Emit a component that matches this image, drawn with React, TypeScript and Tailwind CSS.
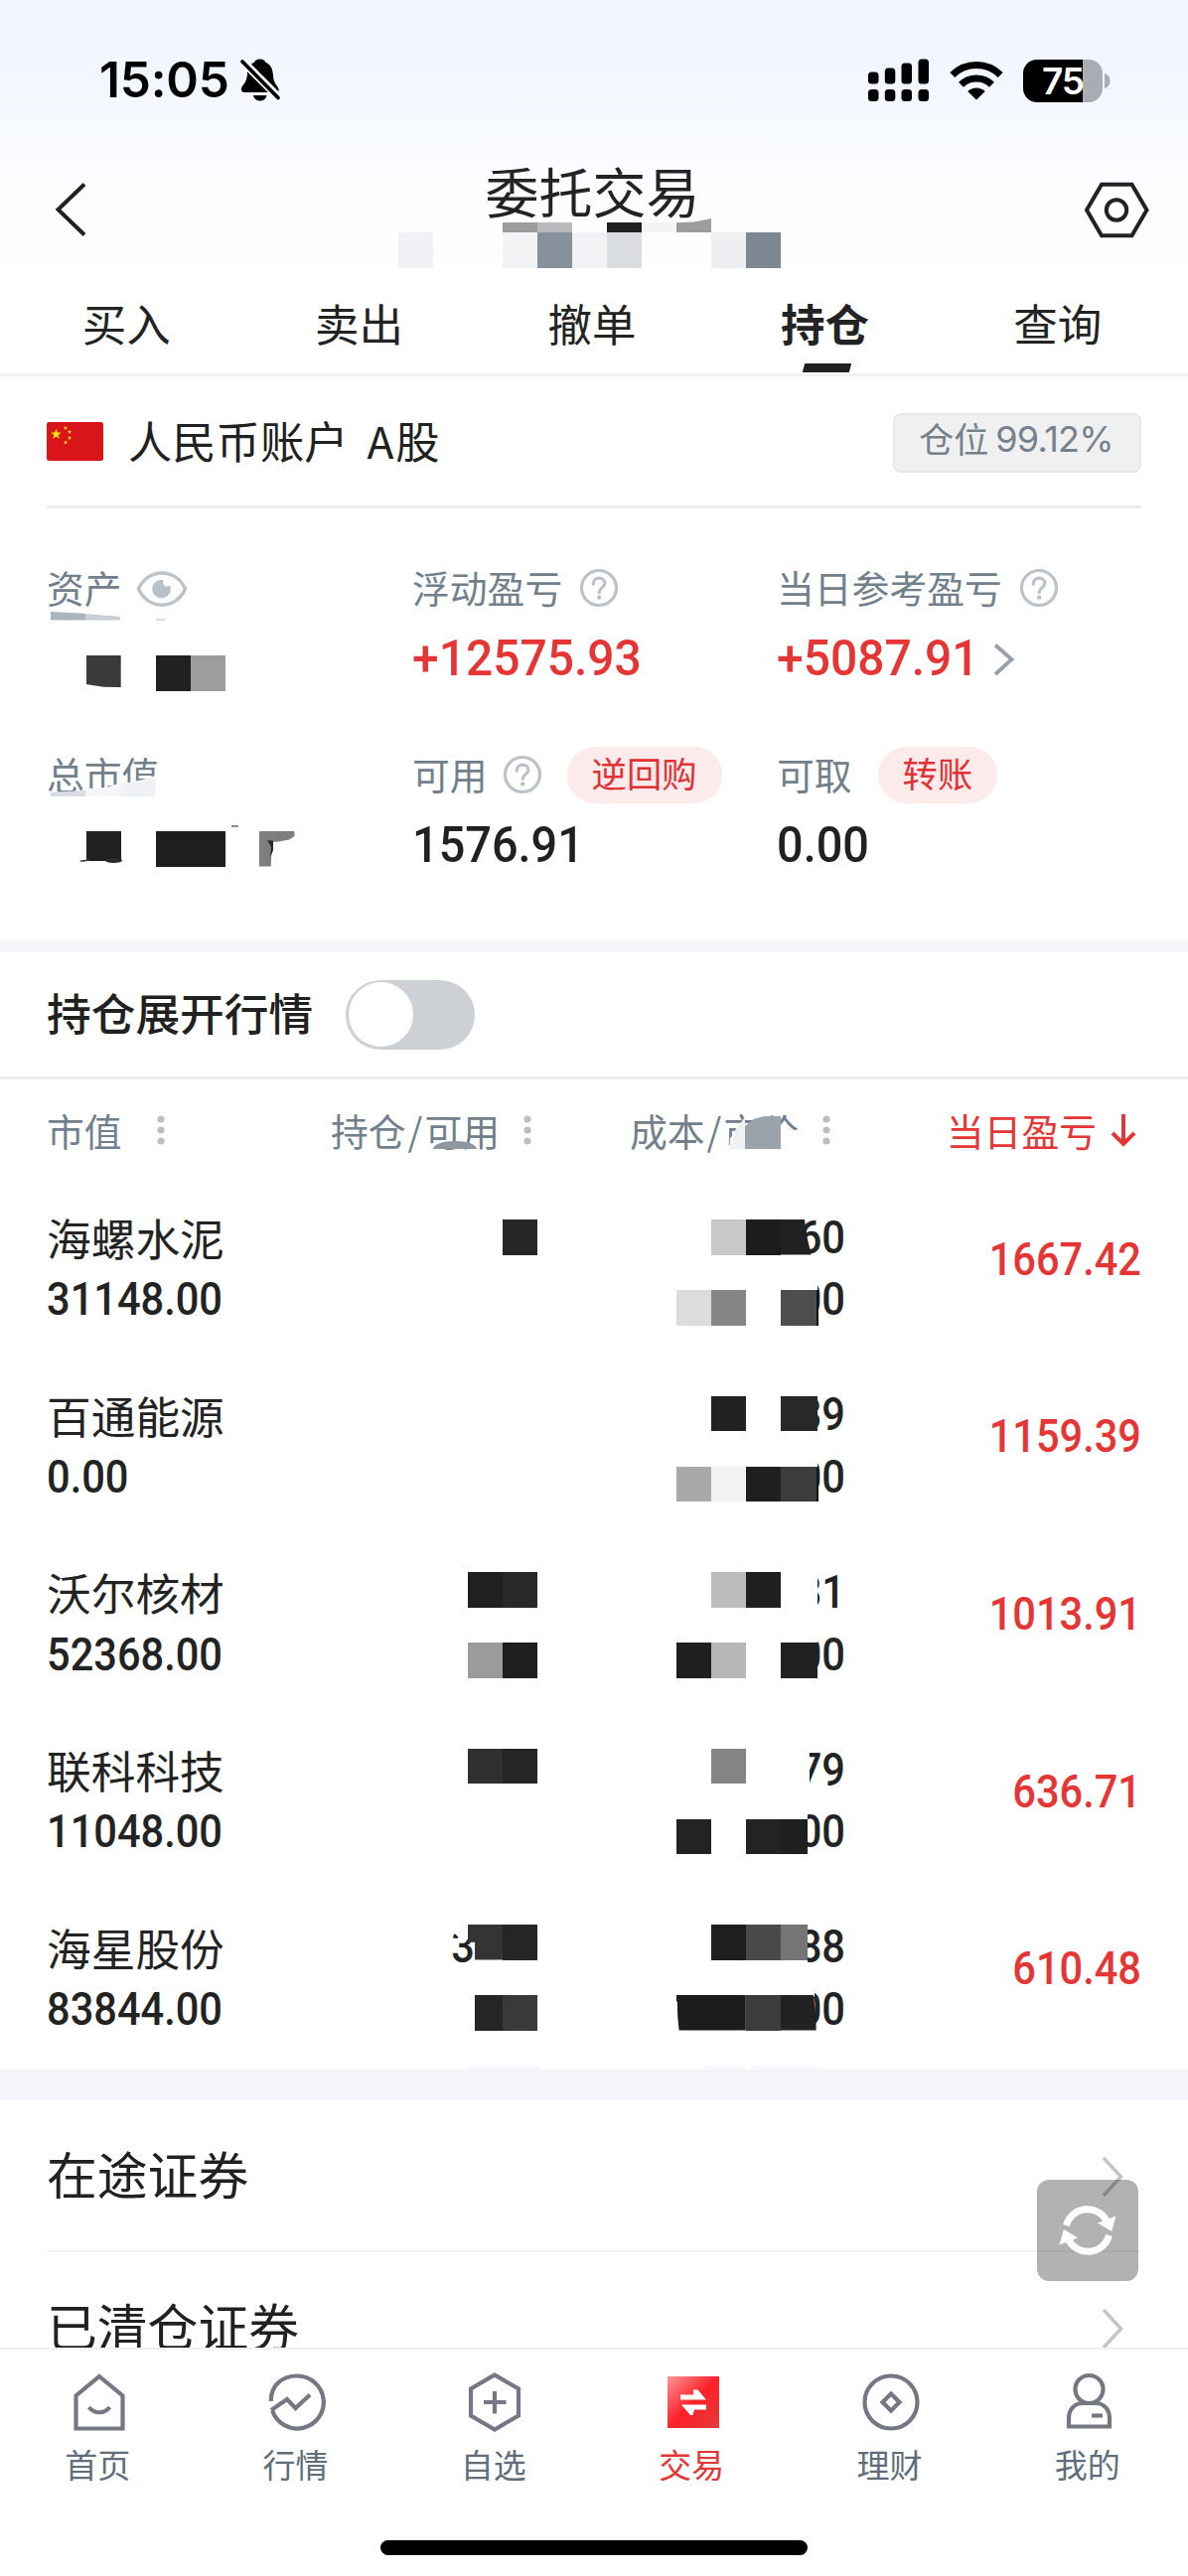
import React from "react";

const cjk = "font-['Noto_Sans_CJK_SC',sans-serif]";
const din = "font-['Roboto',sans-serif] font-medium";

type Cell = { x: number; y: number; w?: number; h?: number; c: string; clip?: string };

/* Pixelated privacy blocks laid over the content of a relative container. */
function Mosaic({ cells }: { cells: Cell[] }) {
  return (
    <>
      {cells.map((b, i) => (
        <span
          key={i}
          aria-hidden
          className="absolute block"
          style={{ left: b.x, top: b.y, width: b.w ?? 35.2, height: b.h ?? 35.5, background: b.c, clipPath: b.clip }}
        />
      ))}
    </>
  );
}

function Help() {
  return (
    <svg width="40" height="40" viewBox="0 0 40 40" fill="none" stroke="#bcc2c8" strokeWidth="3.200" className="mt-[3px]">
      <circle cx="20" cy="20" r="17.5" />
      <path d="M14.2 16.2c0-3.6 2.5-6 5.9-6s5.8 2.300 5.800 5.200c0 4.200-5.700 4.600-5.700 9" strokeLinecap="round" />
      <circle cx="20.200" cy="29.500" r="2.200" fill="#bcc2c8" stroke="none" />
    </svg>
  );
}

function Dots() {
  return (
    <svg width="8" height="32" viewBox="0 0 8 32" fill="#b9bfc5" className="mt-[3px]">
      <circle cx="4" cy="5" r="3.600" />
      <circle cx="4" cy="16" r="3.600" />
      <circle cx="4" cy="27" r="3.600" />
    </svg>
  );
}

function Chevron() {
  return (
    <svg width="24" height="40" viewBox="0 0 24 40" fill="none" stroke="#c6c6c6" strokeWidth="3.600" className="mt-[3px]">
      <path d="M3 1 L20.500 20 L3 39" />
    </svg>
  );
}

function StatusBar() {
  return (
    <div className="flex h-[162px] shrink-0 items-center pr-[78px] pl-[100px]">
      <span className="font-['Inter',sans-serif] text-[49.5px] leading-none font-semibold tracking-[-0.2px] text-black">15:05</span>
      <svg width="41" height="44" viewBox="0 0 41 44" className="ml-[11px]">
        <path d="M19.700 0.500c-3.200 0-5 1.500-5.600 3.200C8.500 6 6.800 11 6.600 17.500c-.3 7.500-5.600 9-5.600 13.500 0 2 1 3 3 3h31.500c2.600 0 3.500-1.200 3-3.200-.9-3.800-5-5.300-5.500-13.300C32.700 11 31 6 25.300 3.700 24.700 2 22.900.5 19.700.5z" fill="#000" />
        <path d="M13 37h13.500c-.5 3.300-3.300 5.500-6.700 5.500S13.500 40.300 13 37z" fill="#000" />
        <path d="M-3 -2.500 L41 41.500" stroke="#f4f8ff" strokeWidth="8" />
        <path d="M-4 7 L7 18 L6 0 Z" fill="#f4f8ff" />
        <path d="M2 3 L38 39.500" stroke="#000" strokeWidth="3.600" strokeLinecap="round" />
      </svg>
      <div className="ml-auto flex items-center">
        <svg width="62" height="44" viewBox="0 0 62 44" fill="#000">
          <rect x="0" y="13.500" width="10.500" height="12" rx="3.500" />
          <rect x="16.800" y="9.500" width="10.500" height="16" rx="3.500" />
          <rect x="33.500" y="4.500" width="10.500" height="21" rx="3.500" />
          <rect x="50.500" y="0.500" width="10.500" height="25" rx="3.500" />
          <rect x="0" y="31" width="10.500" height="12" rx="3.500" />
          <rect x="16.800" y="31" width="10.500" height="12" rx="3.500" />
          <rect x="33.500" y="31" width="10.500" height="12" rx="3.500" />
          <rect x="50.500" y="31" width="10.500" height="12" rx="3.500" />
        </svg>
        <svg width="54" height="40" viewBox="0 0 54 40" fill="none" stroke="#000" strokeWidth="7" className="ml-[20px]">
          <path d="M2.800 14.500 A34.500 34.500 0 0 1 51.200 14.500" />
          <path d="M11.500 24.300 A22 22 0 0 1 42.500 24.300" />
          <path d="M27 39.500 L18.200 31 A12.500 12.500 0 0 1 35.800 31 Z" fill="#000" stroke="none" />
        </svg>
        <div className="ml-[20px] flex items-center">
          <div className="flex h-[43px] w-[80px] items-center justify-center rounded-[14px] bg-[linear-gradient(90deg,#000_60px,#a9adb3_60px)]">
            <span className="font-['Inter',sans-serif] text-[37px] leading-none font-semibold tracking-[-1px] text-white">75</span>
          </div>
          <svg width="6" height="15" viewBox="0 0 6 15" className="ml-[2px]">
            <path d="M0 0 C4 1.500 5.500 4 5.500 7.500 S4 13.500 0 15 Z" fill="#a9adb3" />
          </svg>
        </div>
      </div>
    </div>
  );
}

const titleCells: Cell[] = [
  { x: 401, y: 72, c: "#eff1f4" },
  { x: 506, y: 62, h: 10, c: "#9b9c9e" },
  { x: 541, y: 62, h: 10, c: "#b9babc" },
  { x: 506, y: 72, c: "#f1f3f5" },
  { x: 541, y: 72, c: "#87919b" },
  { x: 576, y: 72, c: "#f1f3f5" },
  { x: 611, y: 62, h: 10, c: "#212121" },
  { x: 646, y: 62, h: 10, c: "#f3f4f6" },
  { x: 681, y: 58, h: 14, c: "#9c9d9f", clip: "polygon(0 30%, 50% 25%, 100% 0, 100% 100%, 0 100%)" },
  { x: 611, y: 72, c: "#d9dde0" },
  { x: 716, y: 72, c: "#eeeff1" },
  { x: 751, y: 72, c: "#7c8791" },
];

function NavBar() {
  return (
    <div className="relative flex h-[98px] shrink-0 justify-between pr-[39px] pl-[54px]">
      <svg width="36" height="98" viewBox="0 0 36 98" fill="none" stroke="#212121" strokeWidth="4">
        <path d="M31 23.500 L4.500 49 L31 74.500" />
      </svg>
      <h1 className={`${cjk} ml-[12px] pt-px text-[54px] leading-[57px] text-[#232323]`}>委托交易</h1>
      <svg width="66" height="98" viewBox="0 0 66 98" fill="none" stroke="#212121" strokeWidth="4">
        <path d="M3 49.500 L18 23.800 H48.500 L63.500 49.500 L48.500 75.200 H18 Z" />
        <circle cx="33" cy="49.500" r="10.200" />
      </svg>
      <Mosaic cells={titleCells} />
    </div>
  );
}

function Tabs() {
  return (
    <div className="flex h-[119px] shrink-0 border-b-[3px] border-[#efeff0] pt-[15px] pr-[14px] pl-[10px]">
      {["买入", "卖出", "撤单", "持仓", "查询"].map((t) => {
        const on = t === "持仓";
        return (
          <div key={t} className="relative flex flex-1 items-center justify-center">
            <span className={`${cjk} text-[44.5px] leading-none text-[#232323] ${on ? "font-bold" : ""}`}>{t}</span>
            {on && <span className="absolute bottom-px ml-[4px] h-[9px] w-[47px] -skew-x-[15deg] bg-[#212121]" />}
          </div>
        );
      })}
    </div>
  );
}

function Flag() {
  const star = (cx: number, cy: number, r: number) =>
    Array.from({ length: 10 }, (_, i) => {
      const a = -Math.PI / 2 + (i * Math.PI) / 5;
      const q = i % 2 ? r * 0.4 : r;
      return `${cx + q * Math.cos(a)},${cy + q * Math.sin(a)}`;
    }).join(" ");
  return (
    <svg width="57" height="39" viewBox="0 0 57 39">
      <rect width="57" height="39" rx="2.500" fill="#d9151a" />
      <g fill="#fde30a">
        <polygon points={star(9.500, 12.300, 5.600)} />
        <polygon points={star(19, 6, 2.200)} />
        <polygon points={star(23, 10, 2.200)} />
        <polygon points={star(23, 16, 2.200)} />
        <polygon points={star(19, 20.500, 2.200)} />
      </g>
    </svg>
  );
}

function Label({ children }: { children: React.ReactNode }) {
  return <span className={`${cjk} pt-px text-[37.8px] leading-none text-[#72808c]`}>{children}</span>;
}

function Pill({ children }: { children: React.ReactNode }) {
  return (
    <span className={`${cjk} mt-[4px] flex h-[57px] items-center rounded-full bg-[#fdeaeb] px-[25px] pb-[5px] text-[35.3px] leading-none text-[#e03234]`}>
      {children}
    </span>
  );
}

function Figure({ children, red }: { children: React.ReactNode; red?: boolean }) {
  return (
    <span className={`${din} inline-block origin-left text-[50.5px] leading-none ${red ? "scale-x-[0.95] text-[#e53535]" : "scale-x-[0.928] text-[#212121]"}`}>
      {children}
    </span>
  );
}

const summaryCells: Cell[] = [
  { x: 51, y: 104, h: 8.500, c: "#adb5bc", clip: "polygon(0 0, 100% 20%, 100% 100%, 0 100%)" },
  { x: 86, y: 106, h: 6.500, c: "#c9cfd3", clip: "polygon(0 0, 100% 45%, 100% 100%, 0 100%)" },
  { x: 157, y: 111, w: 9, h: 1.500, c: "#d9dde0" },
  { x: 86.500, y: 148, h: 32, c: "#3b3b3b", clip: "polygon(0 0, 100% 0, 100% 100%, 50% 99%, 0 91%)" },
  { x: 156.500, y: 148, c: "#212121" },
  { x: 191.500, y: 148, c: "#9d9d9d" },
  { x: 51, y: 284, w: 35.500, h: 6, c: "#d9dce0", clip: "polygon(0 30%, 100% 0, 100% 100%, 0 100%)" },
  { x: 86, y: 276, w: 36, h: 14, c: "#f6f6f8", clip: "polygon(0 45%, 60% 35%, 100% 0, 100% 100%, 0 100%)" },
  { x: 121.500, y: 269, w: 38, h: 22, c: "#fff", clip: "polygon(0 40%, 60% 20%, 92% 0, 100% 0, 100% 100%, 0 100%)" },
  { x: 121.500, y: 269, w: 35, h: 21, c: "#f0f1f4", clip: "polygon(0 40%, 60% 20%, 100% 0, 100% 100%, 0 100%)" },
  { x: 233, y: 318.500, w: 7, h: 2, c: "#8a8a8a" },
  { x: 86.500, y: 325, h: 30, c: "#212121" },
  { x: 80, y: 353, w: 10, h: 3, c: "#3a3a3a", clip: "polygon(0 60%, 100% 0, 100% 60%, 20% 100%)" },
  { x: 106, y: 352, w: 17, h: 5, c: "#2a2a2a", clip: "ellipse(50% 50% at 50% 50%)" },
  { x: 156.500, y: 325, w: 70, c: "#1e1e1e" },
  { x: 261, y: 325, w: 35.500, c: "#7e7e7e", clip: "polygon(0 0, 100% 0, 100% 14%, 85% 24%, 50% 30%, 36% 30%, 33% 100%, 0 100%)" },
  { x: 268, y: 334, w: 7, h: 17, c: "#262626", clip: "polygon(20% 0, 100% 5%, 100% 60%, 60% 100%, 70% 40%)" },
];

function Account() {
  return (
    <section className="shrink-0">
      <div className="mx-[47px] flex h-[133px] items-center border-b-[3px] border-[#ebebee]">
        <Flag />
        <span className={`${cjk} ml-[25px] pb-[2px] text-[44.3px] leading-none text-[#212121] [word-spacing:9px]`}>
          人民币账户 A<span className="ml-[2px]">股</span>
        </span>
        <span className="mt-[3px] ml-auto flex h-[60px] items-center rounded-[8px] border-2 border-[#e7e7e7] bg-[#f0f0f0] pr-[26px] pb-[7px] pl-[24px] leading-none text-[#75818c]">
          <span className={`${cjk} pb-[3px] text-[35px] leading-none`}>仓位</span>
          <span className="ml-[7px] font-['Inter',sans-serif] text-[36px] leading-none tracking-[-0.700px]">99.12%</span>
        </span>
      </div>
      <div className="relative grid h-[434px] grid-cols-[368px_367px_1fr] grid-rows-[56px_90px_42px_56px_90px] items-center pt-[50px] pl-[47px]">
        <div className="flex items-center">
          <Label>资产</Label>
          <svg width="52" height="40" viewBox="0 0 52 40" className="mt-[5px] ml-[14px]" fill="none" stroke="#bdc3c9" strokeWidth="3.500">
            <path d="M2.500 20 C12 -1.500 40 -1.500 49.500 20 C40 41.500 12 41.500 2.500 20 Z" strokeLinejoin="round" />
            <circle cx="25.500" cy="20" r="9.300" fill="#b9c0c7" stroke="none" />
            <circle cx="31.200" cy="13.500" r="4" fill="#fff" stroke="none" />
          </svg>
        </div>
        <div className="flex items-center gap-[17px]"><Label>浮动盈亏</Label><Help /></div>
        <div className="flex items-center gap-[17px]"><Label>当日参考盈亏</Label><Help /></div>

        <div />
        <Figure red>+12575.93</Figure>
        <div className="flex items-center">
          <Figure red>+5087.91</Figure>
          <svg width="24" height="34" viewBox="0 0 24 34" fill="none" stroke="#98a1aa" strokeWidth="3.800" className="mt-[2px] ml-[3px]">
            <path d="M3 2.500 L19.500 17 L3 32" />
          </svg>
        </div>

        <div className="col-span-3" />

        <Label>总市值</Label>
        <div className="flex items-center"><Label>可用</Label><span className="mr-[25px] ml-[15px]"><Help /></span><Pill>逆回购</Pill></div>
        <div className="flex items-center gap-[26px]"><Label>可取</Label><Pill>转账</Pill></div>

        <div />
        <Figure>1576.91</Figure>
        <Figure>0.00</Figure>
        <Mosaic cells={summaryCells} />
      </div>
    </section>
  );
}

type Row = { name: string; value: string; hold?: string; cost: [string, string]; pnl: string };
const rows: Row[] = [
  { name: "海螺水泥", value: "31148.00", cost: ["60", "00"], pnl: "1667.42" },
  { name: "百通能源", value: "0.00", cost: ["39", "00"], pnl: "1159.39" },
  { name: "沃尔核材", value: "52368.00", cost: ["31", "00"], pnl: "1013.91" },
  { name: "联科科技", value: "11048.00", cost: ["79", "00"], pnl: "636.71" },
  { name: "海星股份", value: "83844.00", hold: "3", cost: ["88", "00"], pnl: "610.48" },
];

const r = (n: number) => 141 + n * 35.5;
const A = 680.8, B = 715.8, C = 750.6, D = 785.8;
const tableCells: Cell[] = [
  { x: 436, y: 62, w: 44, h: 8, c: "#8e979f", clip: "ellipse(50% 100% at 50% 100%)" },
  { x: 735, y: 38, w: 15, h: 36, c: "#fff", clip: "polygon(100% 0, 100% 100%, 0 100%, 0 60%, 35% 40%)" },
  { x: 735, y: 38, w: 15, h: 32, c: "#eff1f3", clip: "polygon(100% 0, 100% 100%, 0 100%, 35% 40%)" },
  { x: 750, y: 37, w: 36, h: 38, c: "#fff", clip: "polygon(0 30%, 25% 8%, 55% 0, 100% 0, 100% 100%, 0 100%)" },
  { x: 750, y: 37, w: 36, h: 33, c: "#9aa3ac", clip: "polygon(0 30%, 25% 8%, 55% 0, 100% 0, 100% 100%, 0 100%)" },
  { x: 785.500, y: 51, w: 22, h: 24, c: "#fff" },
  // row 1
  { x: 506, y: r(0), c: "#272727" },
  { x: B, y: r(0), c: "#c8c8c8" }, { x: C, y: r(0), c: "#1c1c1c" },
  { x: D, y: r(0), w: 31, c: "#212121", clip: "polygon(0 0, 78% 0, 86% 50%, 100% 100%, 0 100%)" },
  { x: A, y: r(2), c: "#dcdcdc" }, { x: B, y: r(2), c: "#868686" }, { x: C, y: r(2) - 10, w: 72, h: 46, c: "#fff" },
  { x: D, y: r(2), w: 37, c: "#4e4e4e" }, { x: 822, y: r(2), w: 2, c: "#111" },
  // row 2
  { x: B, y: r(5), c: "#222222" }, { x: C, y: r(5), w: 72, h: 42, c: "#fff" }, { x: D, y: r(5), w: 37, c: "#282828" },
  { x: A, y: r(7), c: "#a9a9a9" }, { x: B, y: r(7), c: "#f3f3f3" }, { x: C, y: r(7) - 10, w: 72, h: 46, c: "#fff" }, { x: C, y: r(7), c: "#1f1f1f" },
  { x: D, y: r(7), w: 37, c: "#3c3c3c" }, { x: 822, y: r(7), w: 2, c: "#151515" },
  // row 3
  { x: 471, y: r(10), c: "#202020" }, { x: 506, y: r(10), c: "#282828" },
  { x: B, y: r(10), c: "#bcbcbc" }, { x: D, y: r(10), w: 37, h: 42, c: "#fff" }, { x: C, y: r(10), c: "#1f1f1f" },
  { x: 471, y: r(12), c: "#9b9b9b" }, { x: 506, y: r(12), c: "#1e1e1e" },
  { x: A, y: r(12), c: "#1f1f1f" }, { x: B, y: r(12), c: "#b7b7b7" }, { x: D, y: r(12) - 10, w: 37, h: 12, c: "#fff" }, { x: D, y: r(12), w: 37, c: "#212121" },
  // row 4
  { x: 471, y: r(15), c: "#303030" }, { x: 506, y: r(15), c: "#252525" },
  { x: B, y: r(15), c: "#848484" }, { x: D, y: r(15), w: 29, h: 46, c: "#fff" },
  { x: A, y: r(17), c: "#232323" }, { x: C, y: r(17), c: "#232323" }, { x: D, y: r(17) - 8, w: 27, h: 12, c: "#fff" }, { x: D, y: r(17), w: 27, c: "#1f1f1f" },
  // row 5
  { x: 471, y: r(20), c: "#343434", clip: "polygon(0 0, 100% 0, 100% 100%, 20% 100%, 20% 50%, 0 50%)" }, { x: 506, y: r(20), c: "#252525" },
  { x: 455, y: r(20) + 1, w: 16, h: 14, c: "#fff", clip: "polygon(0 0, 100% 0, 100% 100%, 55% 100%, 20% 60%, 0 60%)" },
  { x: B, y: r(20), c: "#1e1e1e" }, { x: C, y: r(20), c: "#4a4a4a" }, { x: D, y: r(20), w: 27, h: 45, c: "#fff" }, { x: D, y: r(20), w: 27, c: "#757575" },
  { x: 478, y: r(22), w: 28, c: "#262626" }, { x: 506, y: r(22), c: "#393939" },
  { x: D, y: r(22) - 8, w: 34, h: 10, c: "#fff" },
  { x: A, y: r(22), w: 70, c: "#1c1c1c", clip: "polygon(0 0, 100% 0, 100% 100%, 4% 100%, 2% 60%, 1.5% 18%, 0 18%)" },
  { x: C, y: r(22), c: "#3c3c3c" }, { x: D, y: r(22), w: 37, c: "#222222", clip: "polygon(0 0, 90% 0, 96% 60%, 97% 100%, 0 100%)" },
  { x: 469, y: 993, w: 75, h: 4, c: "#f8f9fc" }, { x: 710, y: 993, w: 40, h: 4, c: "#f9f9fc" }, { x: 755, y: 993, w: 74, h: 4, c: "#f8f9fc" },
];

function Num({ children, right, red }: { children: React.ReactNode; right?: boolean; red?: boolean }) {
  return (
    <span className={`${din} flex h-[60px] scale-x-[0.918] items-center text-[45.3px] leading-none ${right ? "origin-right justify-end" : "origin-left"} ${red ? "text-[#e53535]" : "text-[#232323]"}`}>
      {children}
    </span>
  );
}

function Holdings() {
  const slash = <span className="mx-[2px]">/</span>;
  return (
    <section className="relative h-[997px] shrink-0">
      <div className="flex h-[100px] items-center pr-[52px] pl-[47px]">
        <div className="flex w-[286px] items-center gap-[35px]"><Label>市值</Label><Dots /></div>
        <div className="flex w-[301px] items-center gap-[24px]"><Label>持仓{slash}可用</Label><Dots /></div>
        <div className="flex items-center gap-[24px]"><Label>成本{slash}市价</Label><Dots /></div>
        <div className={`${cjk} ml-auto flex items-center pt-px text-[37.8px] leading-none text-[#e53535]`}>
          当日盈亏
          <svg width="26" height="34" viewBox="0 0 26 34" fill="none" stroke="#e53535" strokeWidth="4" className="mt-px ml-[14px]">
            <path d="M13 1 V30 M2 20 L13 31 L24 20" />
          </svg>
        </div>
      </div>
      {rows.map((x) => (
        <div key={x.name} className="flex h-[178.7px] pt-[29.3px] pr-[47px] pl-[47px]">
          <div className="flex w-[320px] flex-col gap-[2.500px]">
            <span className={`${cjk} flex h-[60px] items-center text-[44.7px] leading-none text-[#232323]`}>{x.name}</span>
            <Num>{x.value}</Num>
          </div>
          <div className="w-[111px]">{x.hold && <Num right>{x.hold}</Num>}</div>
          <div className="flex w-[373px] flex-col gap-[2.500px]">
            <Num right>{x.cost[0]}</Num>
            <Num right>{x.cost[1]}</Num>
          </div>
          <div className="flex-1 pt-[22px]"><Num right red>{x.pnl}</Num></div>
        </div>
      ))}
      <Mosaic cells={tableCells} />
    </section>
  );
}

const navIcons: Record<string, React.ReactNode> = {
  首页: (
    <>
      <path d="M30 4 L53.500 23.500 V56.500 H6.500 V23.500 Z" />
      <path d="M19.500 35 C25 42 35 42 40.500 35" />
    </>
  ),
  行情: (
    <>
      <path d="M3.800 29 C3.500 12 16 3.500 30 3.500 A26.500 26.500 0 1 1 5.200 38.500" />
      <path d="M4 38 L20 27 L28.500 36 L43 22.500" />
    </>
  ),
  自选: (
    <>
      <path d="M30 2.500 L54 16.500 V43.500 L30 57.500 L6 43.500 V16.500 Z" />
      <path d="M30 19 V41.500 M19 30 H41.500" />
    </>
  ),
  交易: (
    <>
      <defs>
        <linearGradient id="tradeFill" x1="0" y1="0" x2="1" y2="1">
          <stop offset="0" stopColor="#ff9596" />
          <stop offset="0.500" stopColor="#fd2129" />
          <stop offset="1" stopColor="#e23a3a" />
        </linearGradient>
      </defs>
      <rect x="4" y="4" width="52" height="52" fill="url(#tradeFill)" stroke="none" />
      <path d="M17 22.500 H30 V17.500 H34.500 L43 27.500 H17 Z" fill="#fff" stroke="none" />
      <path d="M43 37.500 H31 L29.500 43 H27 L18 32.500 H43 Z" fill="#fff" stroke="none" />
    </>
  ),
  理财: (
    <>
      <circle cx="30" cy="30" r="26.500" />
      <path d="M30 21.500 L38.500 30 L30 38.500 L21.500 30 Z" />
    </>
  ),
  我的: (
    <>
      <circle cx="30.500" cy="17" r="14" />
      <path d="M10 54.500 V46 C10 37 16 31 24 31 H37 C45 31 51 37 51 46 V54.500 Z" />
      <path d="M33 43.500 H44" />
    </>
  ),
};

function BottomBar() {
  return (
    <nav className="flex h-[230px] shrink-0 flex-col border-t-2 border-[#f1f1f2] bg-white pt-[23px]">
      <div className="flex">
        {Object.keys(navIcons).map((k) => (
          <div key={k} className="flex flex-1 flex-col items-center">
            <svg width="60" height="60" viewBox="0 0 60 60" fill="none" stroke="#757883" strokeWidth="4.200">{navIcons[k]}</svg>
            <span className={`${cjk} mt-[16px] mr-[3px] text-[33px] leading-none ${k === "交易" ? "text-[#e53535]" : "text-[#5f6e7a]"}`}>{k}</span>
          </div>
        ))}
      </div>
      <div className="mx-auto mt-[60px] h-[15px] w-[430px] rounded-full bg-black" />
    </nav>
  );
}

function LinkRow({ children }: { children: React.ReactNode }) {
  return (
    <div className="mx-[47px] flex h-[153px] shrink-0 items-center justify-between border-b-2 border-[#f3f3f4] pr-[17px]">
      <span className={`${cjk} pb-[5px] text-[50.800px] leading-none text-[#212121]`}>{children}</span>
      <Chevron />
    </div>
  );
}

export default function App() {
  return (
    <div className="flex h-[2594px] w-[1196px] flex-col overflow-hidden bg-white bg-[linear-gradient(180deg,#f0f5ff_0px,#f2f6ff_70px,#fafcff_170px,#ffffff_280px)]">
      <main className="flex min-h-0 flex-1 flex-col overflow-hidden">
        <StatusBar />
        <NavBar />
        <Tabs />
        <Account />
        <div className="h-[13px] shrink-0 bg-[#f4f5f9]" />
        <div className="flex h-[128px] shrink-0 items-center border-b-[3px] border-[#ececee] pl-[47px]">
          <span className={`${cjk} pb-[5px] text-[44.700px] leading-none font-medium text-[#212121]`}>持仓展开行情</span>
          <span className="ml-[33px] flex h-[70px] w-[130px] items-center rounded-full bg-[#cdd0d5] p-[3px]">
            <span className="size-[65px] rounded-full bg-white" />
          </span>
        </div>
        <Holdings />
        <div className="h-[31px] shrink-0 bg-[#f4f5fa]" />
        <div className="relative shrink-0">
          <LinkRow>在途证券</LinkRow>
          <LinkRow>已清仓证券</LinkRow>
          <button className="absolute top-[80px] right-[50px] flex size-[102px] items-center justify-center rounded-[12px] bg-black/30">
            <svg width="58" height="54" viewBox="0 0 58 54" fill="none" stroke="#fff" strokeWidth="7">
              <path d="M7.500 22 A22 22 0 0 1 48.500 18" />
              <path d="M50.500 32 A22 22 0 0 1 9.500 36" />
              <path d="M57.500 12.500 L53 28 L39 19.500 Z" fill="#fff" stroke="none" />
              <path d="M0.500 41.500 L5 26 L19 34.500 Z" fill="#fff" stroke="none" />
            </svg>
          </button>
        </div>
      </main>
      <BottomBar />
    </div>
  );
}
